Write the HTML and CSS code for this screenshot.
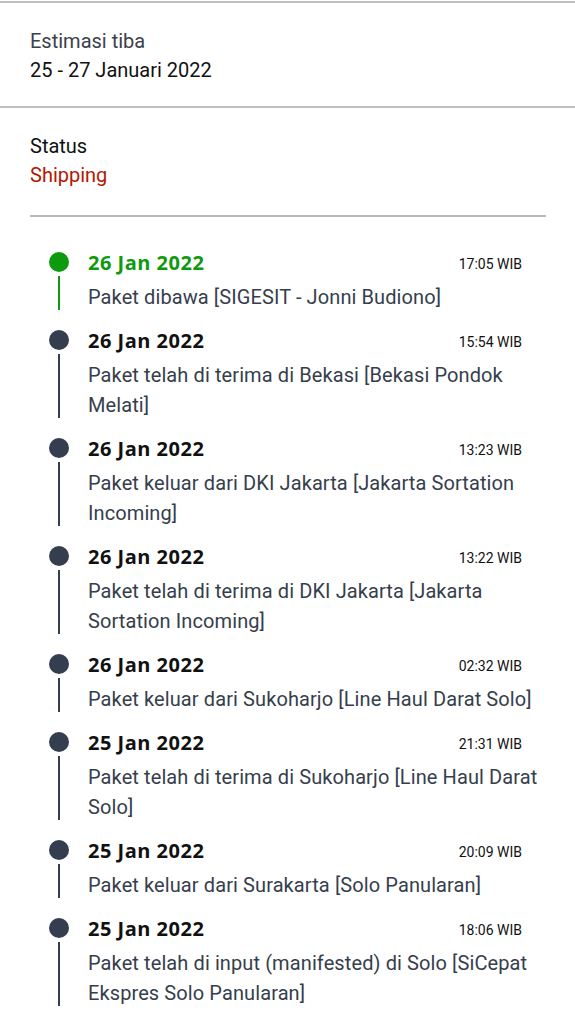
FILE: index.html
```html
<!DOCTYPE html>
<html lang="id">
<head>
    <meta charset="UTF-8">
    <title>Lacak Paket</title>
    <link rel="stylesheet" href="styles.css">
</head>
<body>
<div class="section estimate">
    <div class="label">Estimasi tiba</div>
    <div class="value">25 - 27 Januari 2022</div>
</div>
<div class="section status">
    <div class="label dark">Status</div>
    <div class="value red">Shipping</div>
</div>
<div class="sep"></div>

<ul class="timeline">
    <li class="item active">
        <div class="mark"><span class="dot"></span><span class="line"></span></div>
        <div class="body">
            <div class="head"><span class="date">26 Jan 2022</span><span class="time">17:05 WIB</span></div>
            <div class="desc">Paket dibawa [SIGESIT - Jonni Budiono]</div>
        </div>
    </li>
    <li class="item">
        <div class="mark"><span class="dot"></span><span class="line"></span></div>
        <div class="body">
            <div class="head"><span class="date">26 Jan 2022</span><span class="time">15:54 WIB</span></div>
            <div class="desc">Paket telah di terima di Bekasi [Bekasi Pondok Melati]</div>
        </div>
    </li>
    <li class="item">
        <div class="mark"><span class="dot"></span><span class="line"></span></div>
        <div class="body">
            <div class="head"><span class="date">26 Jan 2022</span><span class="time">13:23 WIB</span></div>
            <div class="desc">Paket keluar dari DKI Jakarta [Jakarta Sortation Incoming]</div>
        </div>
    </li>
    <li class="item">
        <div class="mark"><span class="dot"></span><span class="line"></span></div>
        <div class="body">
            <div class="head"><span class="date">26 Jan 2022</span><span class="time">13:22 WIB</span></div>
            <div class="desc">Paket telah di terima di DKI Jakarta [Jakarta Sortation Incoming]</div>
        </div>
    </li>
    <li class="item">
        <div class="mark"><span class="dot"></span><span class="line"></span></div>
        <div class="body">
            <div class="head"><span class="date">26 Jan 2022</span><span class="time">02:32 WIB</span></div>
            <div class="desc">Paket keluar dari Sukoharjo [Line Haul Darat Solo]</div>
        </div>
    </li>
    <li class="item">
        <div class="mark"><span class="dot"></span><span class="line"></span></div>
        <div class="body">
            <div class="head"><span class="date">25 Jan 2022</span><span class="time">21:31 WIB</span></div>
            <div class="desc">Paket telah di terima di Sukoharjo [Line Haul Darat Solo]</div>
        </div>
    </li>
    <li class="item">
        <div class="mark"><span class="dot"></span><span class="line"></span></div>
        <div class="body">
            <div class="head"><span class="date">25 Jan 2022</span><span class="time">20:09 WIB</span></div>
            <div class="desc">Paket keluar dari Surakarta [Solo Panularan]</div>
        </div>
    </li>
    <li class="item">
        <div class="mark"><span class="dot"></span><span class="line"></span></div>
        <div class="body">
            <div class="head"><span class="date">25 Jan 2022</span><span class="time">18:06 WIB</span></div>
            <div class="desc">Paket telah di input (manifested) di Solo [SiCepat Ekspres Solo Panularan]</div>
        </div>
    </li>
</ul>
</body>
</html>
```

FILE: styles.css
```css
*{
    margin: 0;
    padding: 0;
    box-sizing: border-box;
}
body{
    font-family: Roboto, "Liberation Sans", sans-serif;
    background: #fff;
    color: #111;
}
.section{
    padding: 24px 30px 21px;
    border-top: 2px solid #bfbfbf;
}
.estimate{
    margin-top: 1px;
}
.status{
    padding-bottom: 25px;
}
.label{
    font-size: 20px;
    line-height: 28px;
    color: #3a414c;
}
.label.dark{
    color: #111;
}
.value{
    font-size: 20px;
    line-height: 30px;
    color: #111;
}
.red{
    color: #b31800;
}
.sep{
    margin: 0 29px 0 30px;
    border-top: 2px solid #b8b8b8;
}
.timeline{
    list-style: none;
    padding: 31px 30px 0 49px;
}
.item{
    display: flex;
    gap: 19px;
}
.mark{
    width: 20px;
    display: flex;
    flex-direction: column;
    align-items: center;
    padding-top: 4px;
}
.dot{
    width: 20px;
    height: 20px;
    border-radius: 50%;
    background: #353e4f;
    flex: none;
}
.line{
    width: 2px;
    flex: 1;
    margin: 4px 0 16px;
    background: #353e4f;
}
.active .dot,
.active .line{
    background: #0e9a0e;
}
.body{
    flex: 1;
    padding-bottom: 14px;
}
.head{
    display: flex;
    justify-content: space-between;
    align-items: center;
    height: 28px;
}
.date{
    font-family: "Open Sans", sans-serif;
    font-weight: 700;
    font-size: 20px;
    letter-spacing: 0.5px;
    color: #111;
}
.active .date{
    color: #0e9a0e;
}
.time{
    font-size: 14px;
    color: #111;
    margin-right: 23px;
    padding-top: 4px;
}
.desc{
    margin-top: 6px;
    font-size: 20px;
    line-height: 30px;
    letter-spacing: 0.1px;
    color: #363e4c;
}
```
